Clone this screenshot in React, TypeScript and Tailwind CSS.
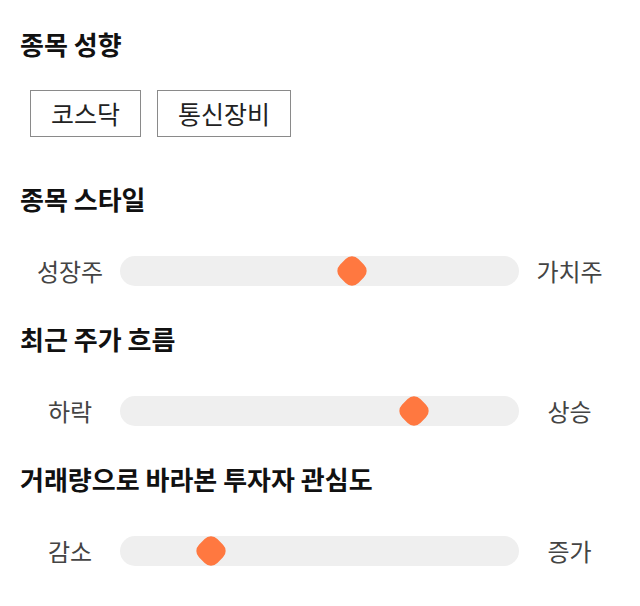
import React from "react";

const font = { fontFamily: '"Noto Sans CJK KR", "Noto Sans", sans-serif' };

function Heading({ children, className = "" }: { children: React.ReactNode; className?: string }) {
  return (
    <h2 className={`text-[26px] leading-[32px] h-[32px] font-bold text-[#111] ${className}`}>{children}</h2>
  );
}

function Slider({ left, right, center, className = "" }: { left: string; right: string; center: number; className?: string }) {
  return (
    <div className={`flex items-center h-[30px] ${className}`}>
      <div className="w-[100px] text-center text-[24px] leading-[30px] text-[#444]">{left}</div>
      <div className="relative flex-1 h-[30px] rounded-full bg-[#efefef]">
        <div
          className="absolute top-1/2 w-[26px] h-[26px] rounded-[9px] bg-[#ff7840] rotate-45"
          style={{ left: center - 13, marginTop: -13 }}
        />
      </div>
      <div className="w-[101px] text-center text-[24px] leading-[30px] text-[#444]">{right}</div>
    </div>
  );
}

export default function App() {
  return (
    <div className="w-[640px] h-[606px] bg-white pl-[20px] pr-[20px] pt-[28px]" style={font}>
      <Heading>종목 성향</Heading>
      <div className="flex gap-[16px] mt-[30px] pl-[10px]">
        <div className="h-[47px] px-[20px] border border-[#8a8a8a] flex items-center text-[25px] text-[#222]">코스닥</div>
        <div className="h-[47px] px-[20px] border border-[#8a8a8a] flex items-center text-[25px] text-[#222]">통신장비</div>
      </div>
      <Heading className="mt-[46px]">종목 스타일</Heading>
      <Slider className="mt-[41px]" left="성장주" right="가치주" center={232} />
      <Heading className="mt-[37px]">최근 주가 흐름</Heading>
      <Slider className="mt-[41px]" left="하락" right="상승" center={294} />
      <Heading className="mt-[37px]">거래량으로 바라본 투자자 관심도</Heading>
      <Slider className="mt-[41px]" left="감소" right="증가" center={91} />
    </div>
  );
}
